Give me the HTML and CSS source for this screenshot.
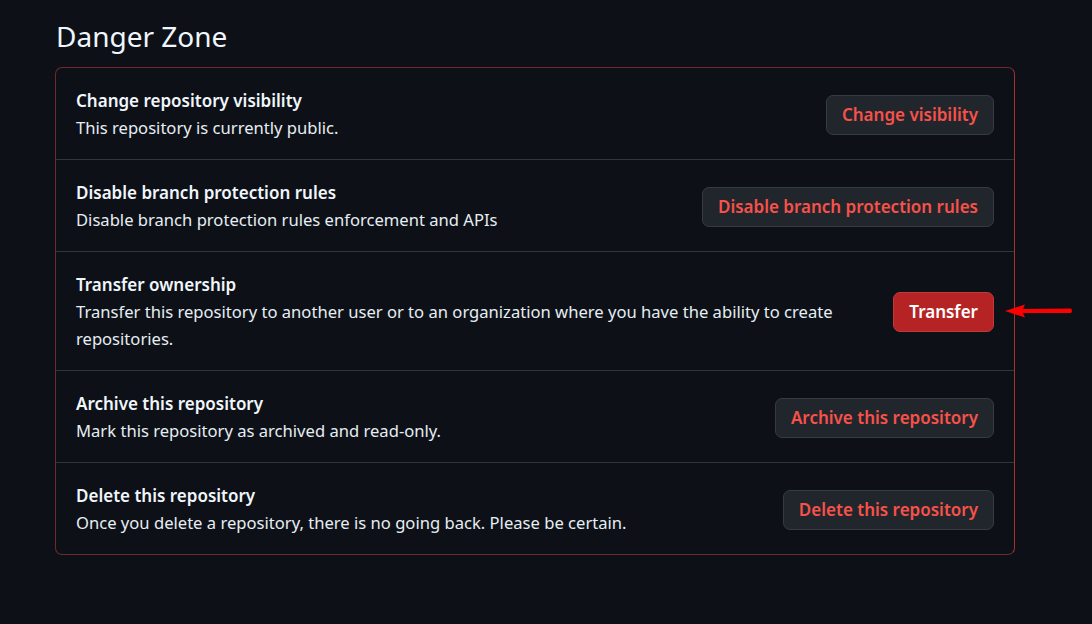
FILE: index.html
```html
<!DOCTYPE html>
<html lang="en">
<head>
<meta charset="utf-8">
<title>Danger Zone</title>
<link rel="stylesheet" href="styles.css">
</head>
<body>
<main class="page">
  <h2 class="heading">Danger Zone</h2>
  <div class="box">
    <div class="row">
      <div class="info">
        <div class="title">Change repository visibility</div>
        <div class="desc">This repository is currently public.</div>
      </div>
      <button class="btn">Change visibility</button>
    </div>
    <div class="row">
      <div class="info">
        <div class="title">Disable branch protection rules</div>
        <div class="desc">Disable branch protection rules enforcement and APIs</div>
      </div>
      <button class="btn">Disable branch protection rules</button>
    </div>
    <div class="row">
      <div class="info">
        <div class="title">Transfer ownership</div>
        <div class="desc">Transfer this repository to another user or to an organization where you have the ability to create repositories.</div>
      </div>
      <div class="btn-wrap">
        <button class="btn btn-danger">Transfer</button>
        <svg class="arrow" width="68" height="14" viewBox="0 0 68 14"><path d="M0 7 L20 0.5 L18 5 L66 4.5 Q68 6.8 66 9 L18 9 L20 13.5 Z" fill="#ff0000"/></svg>
      </div>
    </div>
    <div class="row">
      <div class="info">
        <div class="title">Archive this repository</div>
        <div class="desc">Mark this repository as archived and read-only.</div>
      </div>
      <button class="btn">Archive this repository</button>
    </div>
    <div class="row">
      <div class="info">
        <div class="title">Delete this repository</div>
        <div class="desc">Once you delete a repository, there is no going back. Please be certain.</div>
      </div>
      <button class="btn">Delete this repository</button>
    </div>
  </div>
</main>
</body>
</html>
```
FILE: styles.css
```css
html, body {
  margin: 0;
  background: #0d1117;
  color: #e6edf3;
  font-family: "Noto Sans", "Open Sans", sans-serif;
}
.page {
  padding: 17px 0 0 55px;
  width: 960px;
}
.heading {
  margin: 0 0 12px 1px;
  font-size: 28px;
  font-weight: 400;
  line-height: 38px;
  color: #f0f6fc;
}
.box {
  border: 1px solid #6e2a2c;
  border-right-color: #a8302f;
  border-radius: 7px;
}
.row {
  display: flex;
  align-items: center;
  justify-content: space-between;
  gap: 40px;
  padding: 20px 20px 18px 20px;
  border-top: 1px solid #30363d;
}
.row:first-child {
  border-top: none;
}
.info {
  max-width: 790px;
}
.title {
  font-size: 17px;
  font-weight: 600;
  line-height: 26px;
  color: #f0f6fc;
}
.desc {
  font-size: 16.6px;
  line-height: 27px;
  font-weight: 400;
  color: #e6edf3;
}
.btn {
  flex: none;
  height: 40px;
  padding: 0 15px;
  background: #21262d;
  border: 1px solid #363b42;
  border-radius: 7px;
  color: #f85149;
  font-family: inherit;
  font-size: 17px;
  font-weight: 600;
  line-height: 38px;
}
.btn-wrap {
  position: relative;
  flex: none;
}
.btn-danger {
  background: #b62324;
  border-color: #c3393a;
  color: #ffffff;
}
.arrow {
  position: absolute;
  left: calc(100% + 11px);
  top: 12px;
}
```
